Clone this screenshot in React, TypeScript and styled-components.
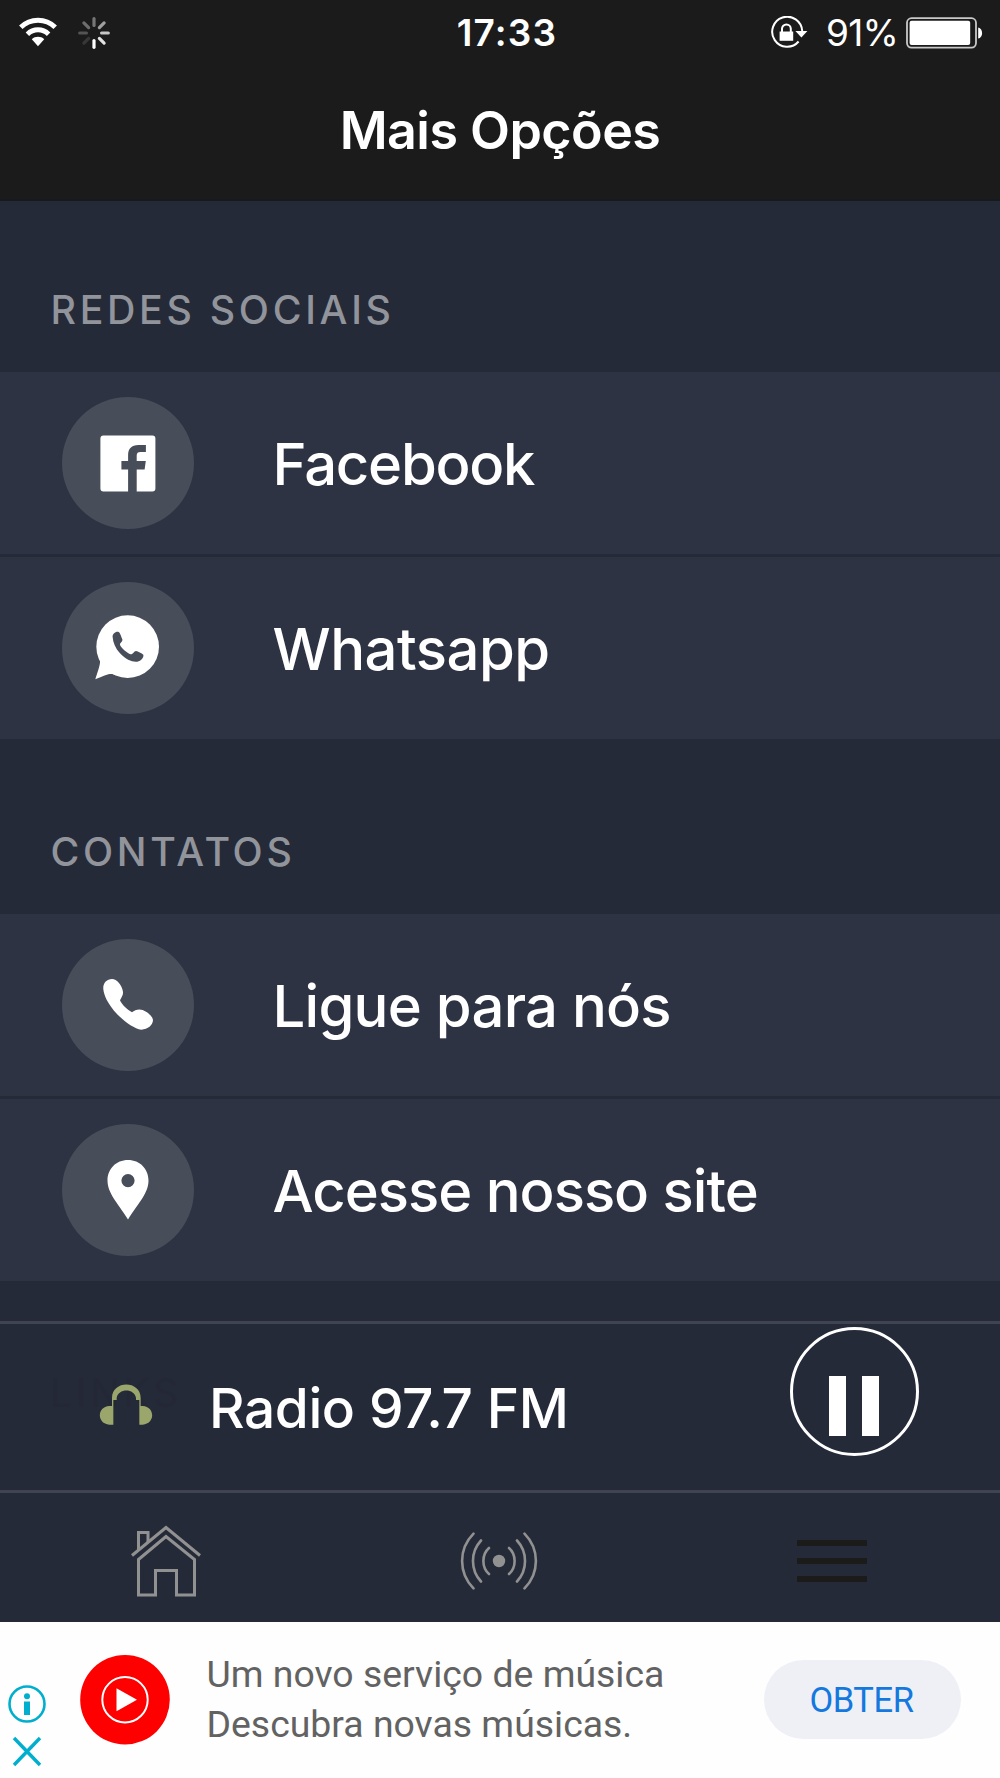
import React from "react";
import styled, { createGlobalStyle } from "styled-components";

const Global = createGlobalStyle`
  * { box-sizing: border-box; }
  body { margin: 0; background: #252a38; }
`;

const Screen = styled.div`
  width: 1000px;
  height: 1778px;
  display: flex;
  flex-direction: column;
  overflow: hidden;
  background: #252a38;
  color: #fff;
  font-family: Inter, "Liberation Sans", sans-serif;
`;

const Header = styled.header`
  height: 201px;
  flex: none;
  background: #1b1b1b;
  border-bottom: 2px solid #171a1c;
`;

const StatusBar = styled.div`
  height: 64px;
  display: grid;
  grid-template-columns: 1fr auto 1fr;
  align-items: center;
  padding: 0 16px 0 18px;
`;

const StatusGroup = styled.div<{ $end?: boolean }>`
  display: flex;
  align-items: center;
  justify-content: ${(p) => (p.$end ? "flex-end" : "flex-start")};
`;

const Clock = styled.span`
  padding: 1px 0 0 12px;
  font-size: 37px;
  line-height: 64px;
  font-weight: 600;
  letter-spacing: 1.2px;
`;

const Percent = styled.span`
  padding-top: 1px;
  font-size: 37px;
  line-height: 64px;
  margin: 0 8px 0 18px;
  letter-spacing: -0.8px;
`;

const Title = styled.h1`
  margin: 0;
  height: 134px;
  line-height: 134px;
  text-align: center;
  font-size: 52px;
  font-weight: 600;
  letter-spacing: -0.55px;
`;

const List = styled.main`
  height: 1120px;
  flex: none;
`;

const SectionLabel = styled.h2<{ $height: number }>`
  margin: 0;
  height: ${(p) => p.$height}px;
  padding: 0 0 42px 50.5px;
  display: flex;
  align-items: flex-end;
  font-size: 39.3px;
  line-height: 40px;
  font-weight: 500;
  letter-spacing: 3.7px;
  color: #92949b;
`;

const Row = styled.div`
  height: 182px;
  display: flex;
  align-items: center;
  padding-left: 62px;
  background: #2e3343;
  & + & { margin-top: 3px; }
`;

const IconDisc = styled.div`
  width: 132px;
  height: 132px;
  border-radius: 50%;
  background: #484d5a;
  display: flex;
  align-items: center;
  justify-content: center;
`;

const RowText = styled.span<{ $spacing: number }>`
  margin-left: 78.5px;
  padding-top: 1px;
  font-size: 58px;
  line-height: 70px;
  font-weight: 500;
  letter-spacing: ${(p) => p.$spacing}px;
`;

const Player = styled.section`
  position: relative;
  height: 172px;
  flex: none;
  display: flex;
  align-items: flex-start;
  border-top: 3px solid #3f4352;
  border-bottom: 3px solid #3f4352;
  padding-left: 99px;
`;

const HiddenLabel = styled.span`
  position: absolute;
  left: 50px;
  top: 49px;
  font-size: 39px;
  line-height: 40px;
  letter-spacing: 3.9px;
  color: #242836;
`;

const HeadphonesSlot = styled.div`
  position: relative;
  margin-top: 60px;
  width: 54px;
  height: 42px;
`;

const Station = styled.span`
  flex: 1;
  margin: 50px 0 0 56px;
  font-size: 55px;
  line-height: 68px;
  font-weight: 500;
  white-space: nowrap;
  letter-spacing: -0.4px;
`;

const PauseButton = styled.button`
  margin: 3px 81px 0 0;
  width: 129px;
  height: 129px;
  border: 3px solid #fff;
  border-radius: 50%;
  padding: 46px 2px 0 0;
  background: none;
  display: flex;
  justify-content: center;
  gap: 16px;
`;

const PauseBar = styled.i`
  width: 17px;
  height: 60px;
  background: #fff;
`;

const Tabs = styled.nav`
  height: 129px;
  flex: none;
  display: grid;
  grid-template-columns: repeat(3, 1fr);
  align-items: center;
  justify-items: center;
  padding: 7px 2px 0 0;
`;

const MenuLines = styled.div`
  width: 70px;
  height: 42px;
  display: flex;
  flex-direction: column;
  justify-content: space-between;
`;

const Line = styled.i`
  height: 6px;
  background: #1b1b1a;
`;

const Ad = styled.aside`
  height: 156px;
  flex: none;
  display: flex;
  background: #fefefe;
  font-family: Roboto, "Liberation Sans", sans-serif;
`;

const AdChoices = styled.div`
  width: 79px;
  padding: 62px 0 0 6.6px;
  display: flex;
  flex-direction: column;
  gap: 10px;
`;

const AdLogo = styled.div`
  width: 92px;
  padding-top: 32px;
`;

const AdCopy = styled.p`
  flex: 1;
  margin: 0;
  padding: 27px 0 0 35.5px;
  font-size: 37.4px;
  line-height: 50px;
  color: #626262;
  white-space: nowrap;
`;

const AdLine = styled.span`
  display: block;
`;

const AdButton = styled.button`
  margin: 38px 39px 0 0;
  width: 197px;
  height: 79px;
  border: 0;
  border-radius: 40px;
  background: #eff0f6;
  color: #1478de;
  font: 400 34.5px/77px Roboto, "Liberation Sans", sans-serif;
  letter-spacing: -0.4px;
  padding: 2px 2px 0 0;
`;

const Wifi = () => (
  <svg width="40" height="31" viewBox="0 0 40 31" fill="none" stroke="#fff" strokeWidth="5">
    <path d="M2.8 10.2C12.5 .8 27.5 .8 37.2 10.2" />
    <path d="M9.4 17.2c6-5.8 15.2-5.8 21.2 0" />
    <path d="M13.8 22.2c3.4-3.2 9-3.2 12.4 0L20 29.2z" fill="#fff" stroke="none" />
  </svg>
);

const SPOKES = [0.4, 0.58, 0.75, 0.88, 1, 0.12, 0.25, 0.36];

const SpinnerSvg = styled.svg`
  margin-left: 20px;
`;

const Spinner = () => (
  <SpinnerSvg width="32" height="32" viewBox="-16 -16 32 32">
    {SPOKES.map((o, i) => (
      <path key={i} d="M0-14.3V-7.6" stroke="#fff" strokeWidth="3.2" strokeLinecap="round" opacity={o} transform={`rotate(${i * 45})`} />
    ))}
  </SpinnerSvg>
);

const RotationLock = () => (
  <svg width="38" height="34" viewBox="0 0 38 34" fill="none" stroke="#fff">
    <path d="M28.6 25.5A15 15 0 1 1 32.2 15" strokeWidth="2" />
    <path d="M25.4 15h12l-6 6.6z" fill="#fff" stroke="none" />
    <path d="M9.6 15.5h13.6v9.3H9.6z" fill="#fff" stroke="none" />
    <path d="M12 16v-3.2a4.4 4.4 0 0 1 8.8 0V16" strokeWidth="2" />
  </svg>
);

const Battery = () => (
  <svg width="78" height="32" viewBox="0 0 78 32">
    <rect x="1" y="1.2" width="69" height="29.4" rx="4.5" fill="none" stroke="#c9c9c9" strokeWidth="1.8" />
    <rect x="3.6" y="3.8" width="60.6" height="24.2" rx="2" fill="#fff" />
    <path d="M72.2 10.4c5.2 1.2 5.2 10 0 11.2z" fill="#fff" />
  </svg>
);

const Facebook = () => (
  <svg width="56" height="57" viewBox="0 0 56 57">
    <path fill="#fff" d="M3.400.5h49a3 3 0 0 1 3 3v50a3 3 0 0 1-3 3H36.700V34.500h7.900l1.200-8.500h-9.100v-5.400c0-2.500 1.200-3.600 3.800-3.600h5.400V10h-7.500c-6.800 0-10.300 3.700-10.300 10.200V26h-6.700v8.500h6.700v22H3.400a3 3 0 0 1-3-3v-50a3 3 0 0 1 3-3z" />
  </svg>
);

const Whatsapp = () => (
  <svg width="64" height="64" viewBox="18 18 192 192" overflow="visible">
    <circle cx="113" cy="110" r="94" fill="#fff" />
    <path fill="#fff" d="M26 140C34 156 30 164 16 208 56 192 60 188 78 196z" />
    <path
      fill="#484d5a"
      d="M68 82C66 72 76 64 84 65c6 1 8 11 13 23 2 7-7 10-7 16 2 8 22 26 32 29 7 1 10-10 16-10 6 1 17 7 22 11 2 8-7 19-18 21-14 2-34-5-52-25C76 115 69 98 68 82z"
    />
  </svg>
);

const Phone = () => (
  <svg width="52" height="52" viewBox="36 57 156 156">
    <path
      fill="#fff"
      d="M40 88C38 70 50 57 66 57c14 0 31 19 33 39 1 10-5 16-9 25 6 13 20 27 36 36 8-7 20-11 32-7 14 6 30 18 31 31-1 15-15 27-35 28-24-3-58-29-82-57C54 130 42 108 40 88z"
    />
  </svg>
);

const Pin = () => (
  <svg width="42" height="61" viewBox="0 0 42 61">
    <path fill="#fff" fillRule="evenodd" d="M21 0C9 0 .5 9 .5 20.500.500 33 10 42 21 59.500 32 42 41.500 33 41.500 20.500 41.500 9 33 0 21 0zm0 14a6.600 6.600 0 1 1 0 13.200A6.600 6.600 0 0 1 21 14z" />
  </svg>
);

const Headphones = () => (
  <svg width="54" height="42" viewBox="27 42 162 126">
    <path
      fill="#9ba66c"
      d="M66 108V84C66 30 152 30 152 84V108H158C196 110 196 162 158 164H148V90H138V84C134 54 84 54 80 84V90H70V164H58C20 162 20 110 58 108z"
    />
  </svg>
);

const House = () => (
  <svg width="70" height="72" viewBox="0 0 70 72" fill="none" stroke="#919191" strokeWidth="3">
    <path d="M1 30.500L35 2.500l34 28" />
    <path d="M7.500 25V7.500h9.500V17" />
    <path d="M7.500 34.500L35 11.500l28.500 23V70H45.500V45.500h-21V70h-17z" />
  </svg>
);

const Broadcast = () => (
  <svg width="78" height="58" viewBox="-39 -29 78 58" fill="none" stroke="#919191" strokeWidth="2.600" strokeLinecap="round">
    <circle r="6.200" fill="#919191" stroke="none" />
    <path d="M-10-13C-17.500-6.500-17.500 6.500-10 13M-18-20.500C-28.700-9-28.700 9-18 20.500M-25.500-27.400C-40.700-12-40.700 12-25.500 27.400" />
    <path d="M10-13C17.500-6.500 17.500 6.500 10 13M18-20.500C28.700-9 28.700 9 18 20.500M25.500-27.400C40.700-12 40.700 12 25.500 27.400" />
  </svg>
);

const InfoIcon = () => (
  <svg width="40" height="40" viewBox="0 0 40 40">
    <circle cx="20" cy="20" r="17.500" fill="none" stroke="#00aecd" strokeWidth="2.600" />
    <circle cx="20" cy="12.300" r="3" fill="#00aecd" />
    <path d="M17 17.500h6V31h-6z" fill="#00aecd" />
  </svg>
);

const CloseIcon = () => (
  <svg width="42" height="34" viewBox="0 0 42 34">
    <path d="M7 4l26 27M33 4l-26 27" stroke="#00aecd" strokeWidth="3.400" />
  </svg>
);

const MusicLogo = () => (
  <svg width="92" height="92" viewBox="0 0 92 92">
    <circle cx="46" cy="45.700" r="44.800" fill="#fe0000" />
    <circle cx="46" cy="45.700" r="22.700" fill="none" stroke="#fff" strokeWidth="2" />
    <path d="M37.500 34.200v23L58 45.700z" fill="#fff" />
  </svg>
);

const Entry = ({ icon, text, spacing }: { icon: React.ReactNode; text: string; spacing: number }) => (
  <Row>
    <IconDisc>{icon}</IconDisc>
    <RowText $spacing={spacing}>{text}</RowText>
  </Row>
);

export default function App() {
  return (
    <>
      <Global />
      <Screen>
        <Header>
          <StatusBar>
            <StatusGroup><Wifi /><Spinner /></StatusGroup>
            <Clock>17:33</Clock>
            <StatusGroup $end><RotationLock /><Percent>91%</Percent><Battery /></StatusGroup>
          </StatusBar>
          <Title>Mais Opções</Title>
        </Header>
        <List>
          <SectionLabel $height={171}>REDES SOCIAIS</SectionLabel>
          <Entry icon={<Facebook />} text="Facebook" spacing={-1.25} />
          <Entry icon={<Whatsapp />} text="Whatsapp" spacing={-0.5} />
          <SectionLabel $height={175}>CONTATOS</SectionLabel>
          <Entry icon={<Phone />} text="Ligue para nós" spacing={-0.75} />
          <Entry icon={<Pin />} text="Acesse nosso site" spacing={-1} />
        </List>
        <Player>
          <HiddenLabel>LINKS</HiddenLabel>
          <HeadphonesSlot><Headphones /></HeadphonesSlot>
          <Station>Radio 97.7 FM</Station>
          <PauseButton aria-label="Pausar"><PauseBar /><PauseBar /></PauseButton>
        </Player>
        <Tabs>
          <House />
          <Broadcast />
          <MenuLines><Line /><Line /><Line /></MenuLines>
        </Tabs>
        <Ad>
          <AdChoices><InfoIcon /><CloseIcon /></AdChoices>
          <AdLogo><MusicLogo /></AdLogo>
          <AdCopy>
            <AdLine>Um novo serviço de música</AdLine>
            <AdLine>Descubra novas músicas.</AdLine>
          </AdCopy>
          <AdButton>OBTER</AdButton>
        </Ad>
      </Screen>
    </>
  );
}
